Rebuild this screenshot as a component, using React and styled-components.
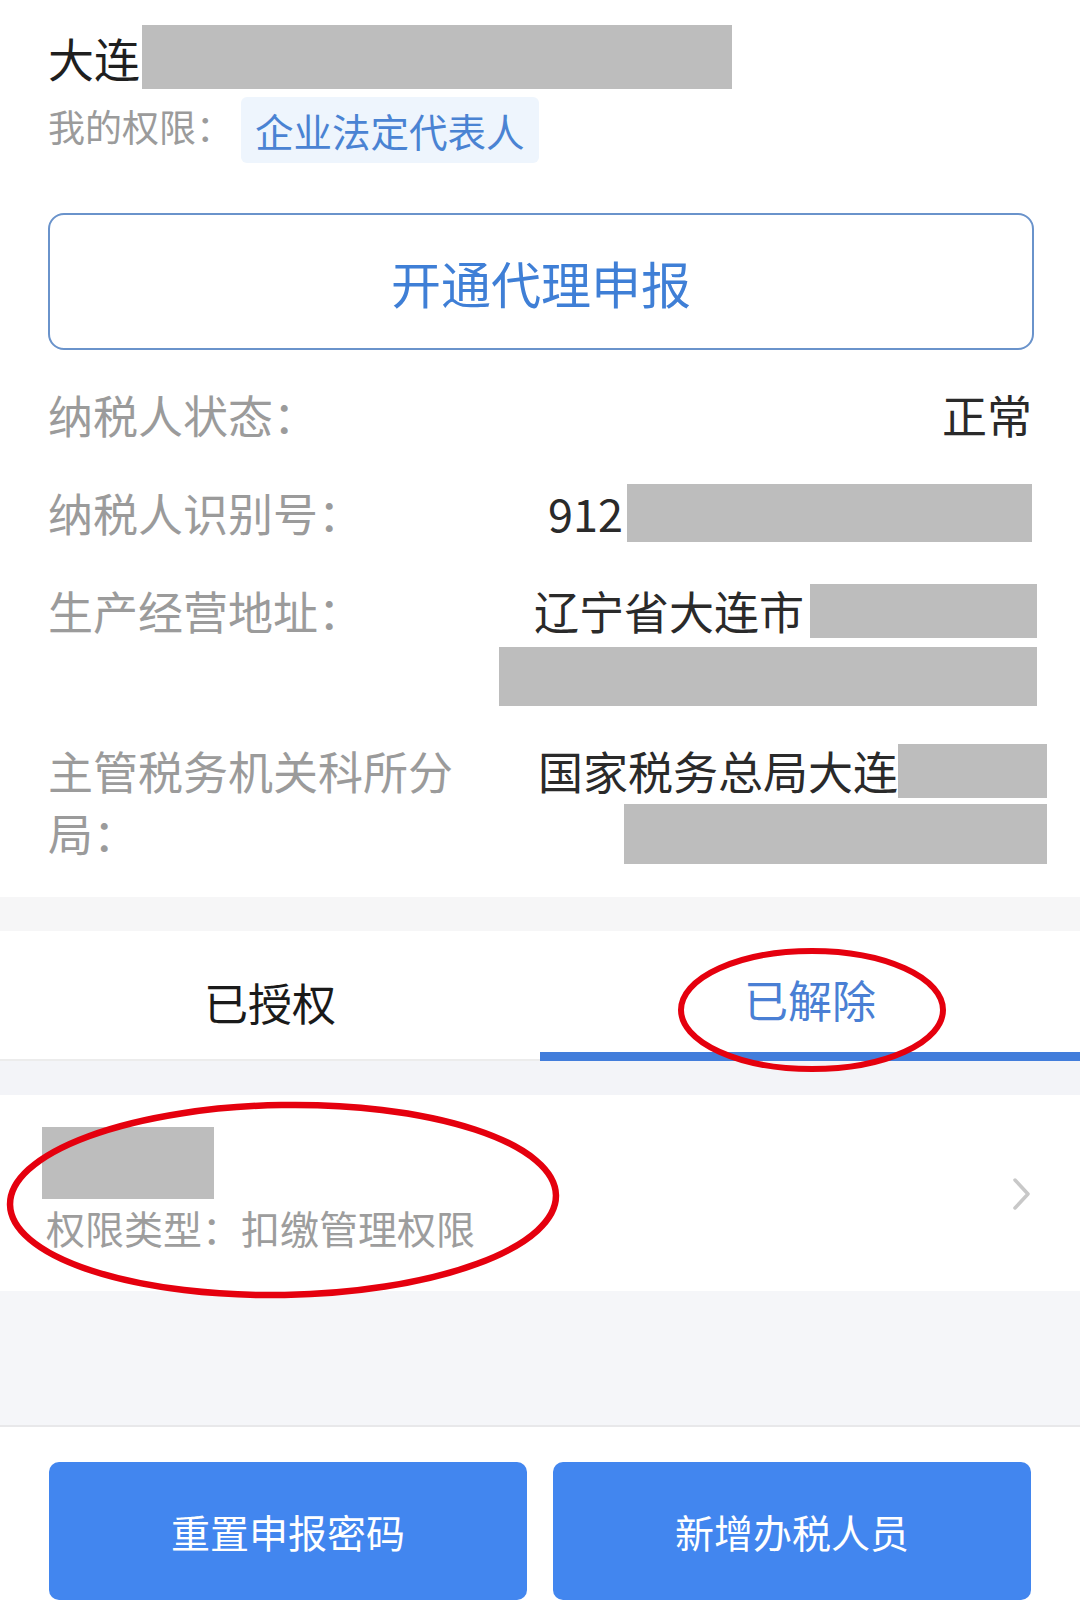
import React from "react";
import styled, { createGlobalStyle } from "styled-components";

const Global = createGlobalStyle`
  html, body { margin: 0; padding: 0; background: #ffffff; }
  body { font-family: "Noto Sans CJK SC", "Noto Sans", sans-serif; }
  * { box-sizing: border-box; }
`;

const Page = styled.div`
  position: relative;
  width: 1080px;
  min-height: 1614px;
  background: #ffffff;
  display: flex;
  flex-direction: column;
`;

const Header = styled.div`
  padding: 25px 48px 0 48px;
  display: flex;
  flex-direction: column;
`;

const TitleRow = styled.div`
  display: flex;
  align-items: center;
  height: 64px;
  font-size: 46px;
  color: #1f1f1f;
  line-height: 64px;
`;

const Redact = styled.span`
  display: inline-block;
  flex: none;
  background: #bdbdbd;
  width: ${(p) => p.$w}px;
  height: ${(p) => p.$h}px;
  margin-left: ${(p) => p.$ml || 0}px;
  margin-right: ${(p) => p.$mr || 0}px;
  margin-top: ${(p) => p.$mt || 0}px;
`;

const PermRow = styled.div`
  display: flex;
  align-items: center;
  margin-top: 8px;
`;

const PermLabel = styled.span`
  font-size: 37px;
  color: #9b9b9b;
  position: relative;
  top: -4px;
`;

const Badge = styled.span`
  margin-left: 8px;
  height: 66px;
  padding: 0 14px;
  display: inline-flex;
  align-items: center;
  background: #eef5fd;
  border-radius: 6px;
  font-size: 38.5px;
  color: #4a83d3;
`;

const OutlineButton = styled.div`
  margin-top: 50px;
  margin-right: -2px;
  height: 137px;
  border: 2px solid #6a93cb;
  border-radius: 16px;
  display: flex;
  align-items: center;
  justify-content: center;
  font-size: 50px;
  color: #3f7fd6;
`;

const InfoList = styled.div`
  display: flex;
  flex-direction: column;
  padding: 16px 48px 15px 48px;
`;

const InfoRow = styled.div`
  display: grid;
  grid-template-columns: 420px 1fr;
  padding: 18px 0;
  font-size: 45px;
  line-height: 62px;
`;

const Label = styled.div`
  color: #9b9b9b;
`;

const Value = styled.div`
  display: flex;
  flex-direction: column;
  align-items: flex-end;
  color: #2a2a2a;
`;

const ValueLine = styled.div`
  display: flex;
  align-items: center;
  height: 62px;
  white-space: nowrap;
`;

const Band = styled.div`
  height: ${(p) => p.$h}px;
  background: ${(p) => p.$bg || "#f5f5f7"};
`;

const Tabs = styled.div`
  display: grid;
  grid-template-columns: 1fr 1fr;
  height: 130px;
  background: #ffffff;
`;

const Tab = styled.div`
  display: flex;
  align-items: center;
  justify-content: center;
  padding-top: 14px;
  font-size: 44px;
  color: ${(p) => (p.$active ? "#4a7fd4" : "#1a1a1a")};
  border-bottom: ${(p) => (p.$active ? "9px solid #427ddb" : "2px solid #ececec")};
`;

const ListItem = styled.div`
  display: flex;
  align-items: center;
  justify-content: space-between;
  padding: 32px 46px 36px 42px;
  background: #ffffff;
`;

const ItemBody = styled.div`
  display: flex;
  flex-direction: column;
`;

const ItemText = styled.div`
  font-size: 39px;
  line-height: 56px;
  color: #9d9d9d;
  padding-left: 4px;
`;

const Chevron = styled.svg`
  width: 24px;
  height: 40px;
  margin-top: 6px;
`;

const BottomBar = styled.div`
  border-top: 2px solid #e8e8ea;
  background: #ffffff;
  display: grid;
  grid-template-columns: 1fr 1fr;
  gap: 26px;
  padding: 35px 49px 13px 49px;
`;

const FilledButton = styled.div`
  height: 138px;
  border-radius: 10px;
  background: #4286ef;
  color: #ffffff;
  font-size: 39px;
  display: flex;
  align-items: center;
  justify-content: center;
`;

const Annotations = styled.svg`
  position: absolute;
  left: 0;
  top: 0;
  width: 1080px;
  height: 1614px;
  pointer-events: none;
`;

export default function App() {
  return (
    <Page>
      <Global />
      <Header>
        <TitleRow>
          大连
          <Redact $w={590} $h={64} $ml={2} />
        </TitleRow>
        <PermRow>
          <PermLabel>我的权限：</PermLabel>
          <Badge>企业法定代表人</Badge>
        </PermRow>
        <OutlineButton>开通代理申报</OutlineButton>
      </Header>

      <InfoList>
        <InfoRow>
          <Label>纳税人状态：</Label>
          <Value>
            <ValueLine>正常</ValueLine>
          </Value>
        </InfoRow>
        <InfoRow>
          <Label>纳税人识别号：</Label>
          <Value>
            <ValueLine>
              912
              <Redact $w={405} $h={58} $ml={4} />
            </ValueLine>
          </Value>
        </InfoRow>
        <InfoRow>
          <Label>生产经营地址：</Label>
          <Value>
            <ValueLine>
              辽宁省大连市
              <Redact $w={227} $h={54} $ml={6} $mr={-5} />
            </ValueLine>
            <ValueLine>
              <Redact $w={538} $h={59} $mr={-5} $mt={6} />
            </ValueLine>
          </Value>
        </InfoRow>
        <InfoRow>
          <Label>主管税务机关科所分局：</Label>
          <Value>
            <ValueLine>
              国家税务总局大连
              <Redact $w={149} $h={54} $mr={-15} />
            </ValueLine>
            <ValueLine>
              <Redact $w={423} $h={60} $mr={-15} $mt={2} />
            </ValueLine>
          </Value>
        </InfoRow>
      </InfoList>

      <Band $h={34} $bg="#f6f6f7" />

      <Tabs>
        <Tab>已授权</Tab>
        <Tab $active>已解除</Tab>
      </Tabs>

      <Band $h={34} $bg="#f3f4f8" />

      <ListItem>
        <ItemBody>
          <Redact $w={172} $h={72} />
          <ItemText>权限类型：扣缴管理权限</ItemText>
        </ItemBody>
        <Chevron viewBox="0 0 24 40">
          <path d="M5 6 L18 20 L5 34" fill="none" stroke="#c8c8c8" strokeWidth="3.5" strokeLinecap="round" strokeLinejoin="round" />
        </Chevron>
      </ListItem>

      <Band $h={134} $bg="#f5f6f9" />

      <BottomBar>
        <FilledButton>重置申报密码</FilledButton>
        <FilledButton>新增办税人员</FilledButton>
      </BottomBar>

      <Annotations viewBox="0 0 1080 1614">
        <ellipse cx="812" cy="1010" rx="131" ry="59" fill="none" stroke="#e5000e" strokeWidth="6" />
        <ellipse cx="283" cy="1200" rx="273" ry="95" fill="none" stroke="#e5000e" strokeWidth="6.5" transform="rotate(-1 283 1200)" />
      </Annotations>
    </Page>
  );
}
